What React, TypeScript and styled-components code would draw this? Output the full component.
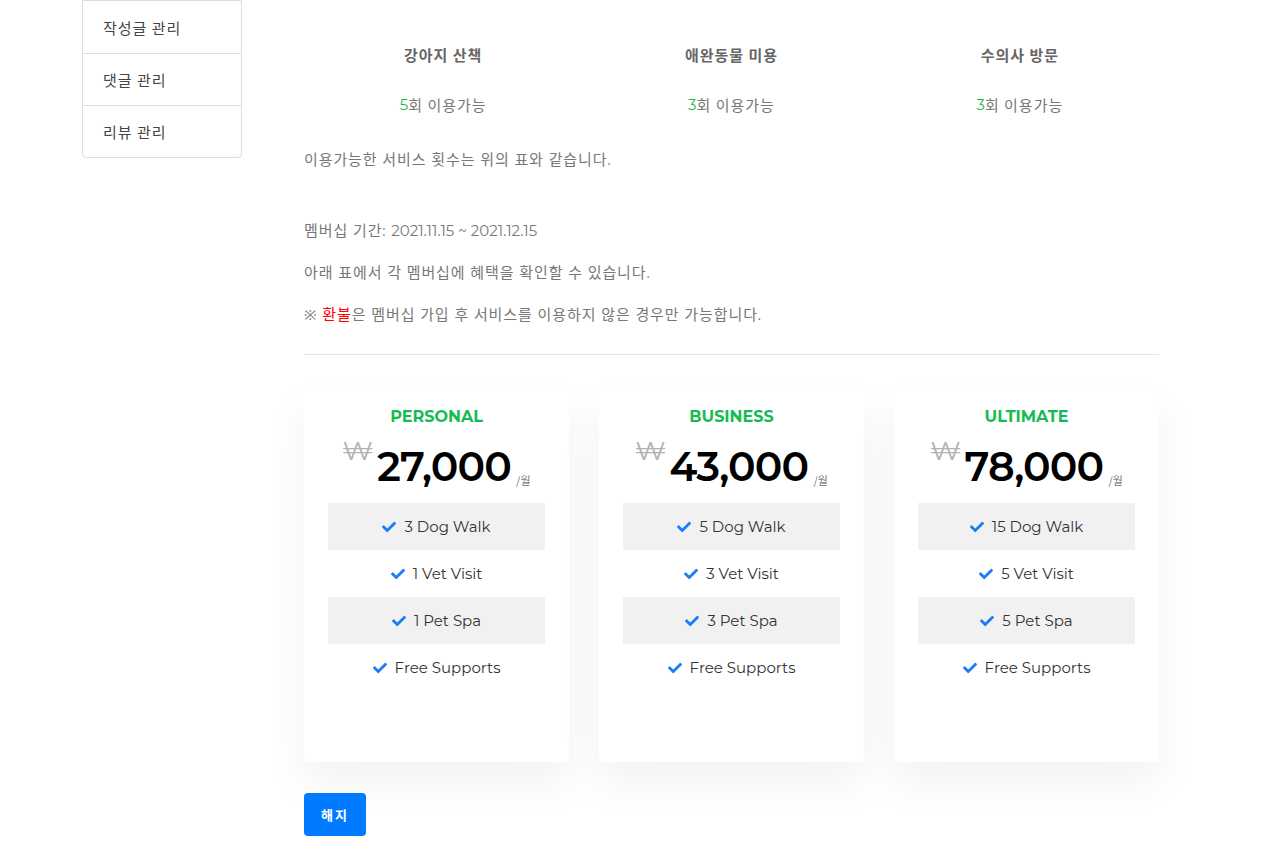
import React from "react";
import styled, { createGlobalStyle } from "styled-components";
import { FaCheck } from "react-icons/fa";

const Global = createGlobalStyle`
  html, body { margin: 0; padding: 0; background: #fff; }
  body { font-family: "Montserrat", "Noto Sans", "Noto Sans CJK KR", sans-serif; color: #777; }
  * { box-sizing: border-box; }
`;

const Page = styled.div`
  display: flex;
  align-items: flex-start;
  padding-left: 82px;
  gap: 62px;
  width: 1269px;
`;

const Sidebar = styled.ul`
  list-style: none;
  margin: 0;
  padding: 0;
  width: 160px;
  border: 1px solid #dcdcdc;
  border-radius: 0 0 4px 4px;
`;

const SideItem = styled.li`
  height: 52px;
  display: flex;
  align-items: center;
  padding-left: 20px;
  font-family: "Noto Sans CJK KR", sans-serif;
  font-size: 15px;
  letter-spacing: 1px;
  color: #444;
  & + & { border-top: 1px solid #dcdcdc; }
`;

const Main = styled.div`
  width: 855px;
  padding-top: 29px;
`;

const Table = styled.div`
  display: grid;
  grid-template-columns: repeat(3, 1fr);
  margin: 0 -5px;
`;

const Cell = styled.div<{ $head?: boolean }>`
  height: 50px;
  display: flex;
  align-items: center;
  justify-content: center;
  font-family: "Noto Sans CJK KR", sans-serif;
  font-size: 15px;
  letter-spacing: 1px;
  font-weight: ${(p) => (p.$head ? 700 : 400)};
  color: ${(p) => (p.$head ? "#666" : "#777")};
`;

const Green = styled.span`
  color: #1cb84f;
  font-family: "Montserrat", sans-serif;
  letter-spacing: 0;
`;

const Para = styled.p<{ $mb?: number }>`
  margin: 0 0 ${(p) => (p.$mb ?? 16)}px;
  line-height: 26px;
  font-size: 15px;
  letter-spacing: 0.9px;
  color: #777;
  font-family: "Montserrat", "Noto Sans", "Noto Sans CJK KR", sans-serif;
  &:first-of-type { margin-top: 18px; }
`;

const Digits = styled.span`
  letter-spacing: 0;
`;

const Red = styled.span`
  color: #ff0000;
`;

const Rule = styled.hr`
  border: 0;
  border-top: 1px solid #e3e3e3;
  margin: 26px 0 35px;
`;

const Cards = styled.div`
  display: grid;
  grid-template-columns: repeat(3, 265px);
  gap: 30px;
`;

const Card = styled.div`
  background: #fff;
  border-radius: 4px;
  padding: 17px 24px 71px;
  box-shadow: 0 20px 45px rgba(0, 0, 0, 0.055);
  text-align: center;
`;

const Title = styled.div`
  font-family: "Montserrat", "Noto Sans", sans-serif;
  font-weight: 700;
  font-size: 16px;
  line-height: 20px;
  color: #17bb53;
`;

const PriceRow = styled.div`
  display: flex;
  justify-content: center;
  align-items: flex-start;
  height: 76px;
  padding-top: 11px;
  color: #000;
`;

const Won = styled.span`
  font-family: "Montserrat", "DejaVu Sans", sans-serif;
  font-size: 26px;
  font-weight: 400;
  color: #b3b3b3;
  line-height: 26px;
  margin-right: 4px;
`;

const Amount = styled.span`
  font-family: "Montserrat", "Noto Sans", sans-serif;
  font-size: 41px;
  font-weight: 600;
  line-height: 46px;
  margin-top: 5px;
  letter-spacing: -0.8px;
`;

const Per = styled.span`
  font-family: "Noto Sans CJK KR", sans-serif;
  font-size: 11px;
  color: #777;
  margin-left: 5px;
  margin-top: 34px;
`;

const Features = styled.ul`
  list-style: none;
  margin: 0;
  padding: 0;
`;

const Feature = styled.li<{ $shade?: boolean }>`
  height: 47px;
  display: flex;
  align-items: center;
  justify-content: center;
  gap: 8px;
  background: ${(p) => (p.$shade ? "#f1f1f1" : "transparent")};
  font-family: "Montserrat", "Noto Sans", sans-serif;
  font-size: 15px;
  color: #333;
  svg { color: #1a7df5; width: 14px; height: 14px; }
`;

const Button = styled.button`
  margin-top: 31px;
  width: 62px;
  height: 43px;
  border: 0;
  border-radius: 4px;
  background: #007bff;
  color: #fff;
  font-family: "Noto Sans CJK KR", sans-serif;
  font-weight: 700;
  font-size: 13px;
  letter-spacing: 2px;
`;

const plans = [
  { name: "PERSONAL", price: "27,000", items: ["3 Dog Walk", "1 Vet Visit", "1 Pet Spa", "Free Supports"] },
  { name: "BUSINESS", price: "43,000", items: ["5 Dog Walk", "3 Vet Visit", "3 Pet Spa", "Free Supports"] },
  { name: "ULTIMATE", price: "78,000", items: ["15 Dog Walk", "5 Vet Visit", "5 Pet Spa", "Free Supports"] },
];

const services = [
  { name: "강아지 산책", n: "5" },
  { name: "애완동물 미용", n: "3" },
  { name: "수의사 방문", n: "3" },
];

export default function App() {
  return (
    <>
      <Global />
      <Page>
        <Sidebar>
          <SideItem>작성글 관리</SideItem>
          <SideItem>댓글 관리</SideItem>
          <SideItem>리뷰 관리</SideItem>
        </Sidebar>
        <Main>
          <Table>
            {services.map((s) => (
              <Cell key={s.name} $head>{s.name}</Cell>
            ))}
            {services.map((s) => (
              <Cell key={s.name + "v"}>
                <Green>{s.n}</Green>회 이용가능
              </Cell>
            ))}
          </Table>
          <Para $mb={45}>이용가능한 서비스 횟수는 위의 표와 같습니다.</Para>
          <Para>
            멤버십 기간: <Digits>2021.11.15 ~ 2021.12.15</Digits>
          </Para>
          <Para>아래 표에서 각 멤버십에 혜택을 확인할 수 있습니다.</Para>
          <Para $mb={0}>
            ※ <Red>환불</Red>은 멤버십 가입 후 서비스를 이용하지 않은 경우만 가능합니다.
          </Para>
          <Rule />
          <Cards>
            {plans.map((p) => (
              <Card key={p.name}>
                <Title>{p.name}</Title>
                <PriceRow>
                  <Won>₩</Won>
                  <Amount>{p.price}</Amount>
                  <Per>/월</Per>
                </PriceRow>
                <Features>
                  {p.items.map((it, i) => (
                    <Feature key={it} $shade={i % 2 === 0}>
                      <FaCheck />
                      {it}
                    </Feature>
                  ))}
                </Features>
              </Card>
            ))}
          </Cards>
          <Button>해지</Button>
        </Main>
      </Page>
    </>
  );
}
